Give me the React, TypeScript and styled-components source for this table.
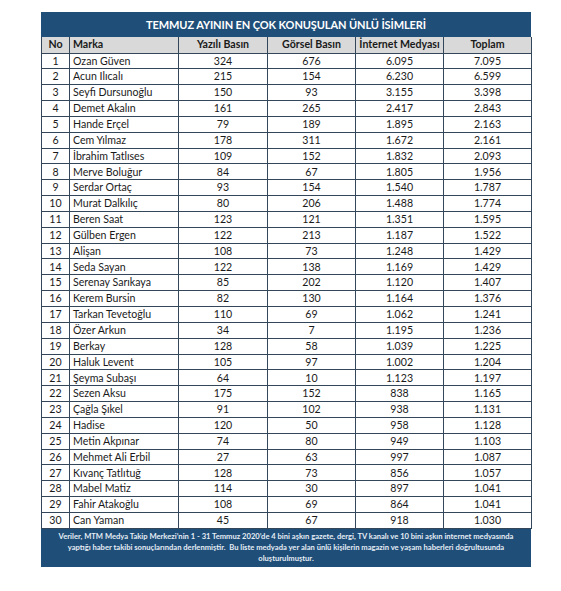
import { createGlobalStyle, styled } from 'styled-components';

const GlobalStyle = createGlobalStyle`
  body {
    margin: 0;
    background: #fff;
    font-family: Lato, 'Open Sans', sans-serif;
  }
`;

const Page = styled.div`
  width: 561px;
  height: 591px;
  padding: 12px 0 0 41px;
  box-sizing: border-box;
`;

const Board = styled.div`
  width: 490px;
  background: #1f4e79;
`;

const Title = styled.div`
  height: 25px;
  display: flex;
  align-items: center;
  justify-content: center;
  color: #fff;
  font-weight: 700;
  font-size: 11px;
  letter-spacing: -0.1px;
`;

const Grid = styled.table`
  width: 490px;
  border-collapse: collapse;
  table-layout: fixed;
  background: #fff;
  font-size: 10.6px;
  color: #1a1a1a;
`;

const HeadCell = styled.th<{ $left?: boolean }>`
  height: 15.5px;
  padding: 0 3px;
  background: #d9d9d9;
  border: 1px solid #34465a;
  border-top: none;
  font-weight: 700;
  font-size: 10.6px;
  line-height: 1;
  white-space: nowrap;
  text-align: ${(p) => (p.$left ? 'left' : 'center')};
`;

const Cell = styled.td<{ $left?: boolean }>`
  height: 14.85px;
  padding: 0 3px;
  border: 1px solid #34465a;
  line-height: 1;
  text-align: ${(p) => (p.$left ? 'left' : 'center')};
  white-space: nowrap;
`;

const Note = styled.div`
  height: 38px;
  display: flex;
  flex-direction: column;
  align-items: center;
  justify-content: center;
  color: #e6edf5;
  font-size: 7.6px;
  font-weight: 700;
  line-height: 11px;
  text-align: center;
`;

const columns = [
  { label: 'No', width: 28 },
  { label: 'Marka', width: 109, left: true },
  { label: 'Yazılı Basın', width: 89 },
  { label: 'Görsel Basın', width: 88 },
  { label: 'İnternet Medyası', width: 88 },
  { label: 'Toplam', width: 88 },
];

const rows: [string, string, string, string, string][] = [
  ['Ozan Güven', '324', '676', '6.095', '7.095'],
  ['Acun Ilıcalı', '215', '154', '6.230', '6.599'],
  ['Seyfi Dursunoğlu', '150', '93', '3.155', '3.398'],
  ['Demet Akalın', '161', '265', '2.417', '2.843'],
  ['Hande Erçel', '79', '189', '1.895', '2.163'],
  ['Cem Yılmaz', '178', '311', '1.672', '2.161'],
  ['İbrahim Tatlıses', '109', '152', '1.832', '2.093'],
  ['Merve Boluğur', '84', '67', '1.805', '1.956'],
  ['Serdar Ortaç', '93', '154', '1.540', '1.787'],
  ['Murat Dalkılıç', '80', '206', '1.488', '1.774'],
  ['Beren Saat', '123', '121', '1.351', '1.595'],
  ['Gülben Ergen', '122', '213', '1.187', '1.522'],
  ['Alişan', '108', '73', '1.248', '1.429'],
  ['Seda Sayan', '122', '138', '1.169', '1.429'],
  ['Serenay Sarıkaya', '85', '202', '1.120', '1.407'],
  ['Kerem Bursin', '82', '130', '1.164', '1.376'],
  ['Tarkan Tevetoğlu', '110', '69', '1.062', '1.241'],
  ['Özer Arkun', '34', '7', '1.195', '1.236'],
  ['Berkay', '128', '58', '1.039', '1.225'],
  ['Haluk Levent', '105', '97', '1.002', '1.204'],
  ['Şeyma Subaşı', '64', '10', '1.123', '1.197'],
  ['Sezen Aksu', '175', '152', '838', '1.165'],
  ['Çağla Şıkel', '91', '102', '938', '1.131'],
  ['Hadise', '120', '50', '958', '1.128'],
  ['Metin Akpınar', '74', '80', '949', '1.103'],
  ['Mehmet Ali Erbil', '27', '63', '997', '1.087'],
  ['Kıvanç Tatlıtuğ', '128', '73', '856', '1.057'],
  ['Mabel Matiz', '114', '30', '897', '1.041'],
  ['Fahir Atakoğlu', '108', '69', '864', '1.041'],
  ['Can Yaman', '45', '67', '918', '1.030'],
];

export default function App() {
  return (
    <>
      <GlobalStyle />
      <Page>
        <Board>
          <Title>TEMMUZ AYININ EN ÇOK KONUŞULAN ÜNLÜ İSİMLERİ</Title>
          <Grid>
            <colgroup>
              {columns.map((c) => (
                <col key={c.label} style={{ width: c.width }} />
              ))}
            </colgroup>
            <thead>
              <tr>
                {columns.map((c) => (
                  <HeadCell key={c.label} $left={c.left}>
                    {c.label}
                  </HeadCell>
                ))}
              </tr>
            </thead>
            <tbody>
              {rows.map((r, i) => (
                <tr key={r[0]}>
                  <Cell>{i + 1}</Cell>
                  <Cell $left>{r[0]}</Cell>
                  <Cell>{r[1]}</Cell>
                  <Cell>{r[2]}</Cell>
                  <Cell>{r[3]}</Cell>
                  <Cell>{r[4]}</Cell>
                </tr>
              ))}
            </tbody>
          </Grid>
          <Note>
            <span>
              Veriler, MTM Medya Takip Merkezi’nin 1 - 31 Temmuz 2020’de 4 bini aşkın gazete, dergi, TV kanalı ve 10 bini aşkın internet medyasında
            </span>
            <span>
              yaptığı haber takibi sonuçlarından derlenmiştir.&nbsp; Bu liste medyada yer alan ünlü kişilerin magazin ve yaşam haberleri doğrultusunda
            </span>
            <span>oluşturulmuştur.</span>
          </Note>
        </Board>
      </Page>
    </>
  );
}
